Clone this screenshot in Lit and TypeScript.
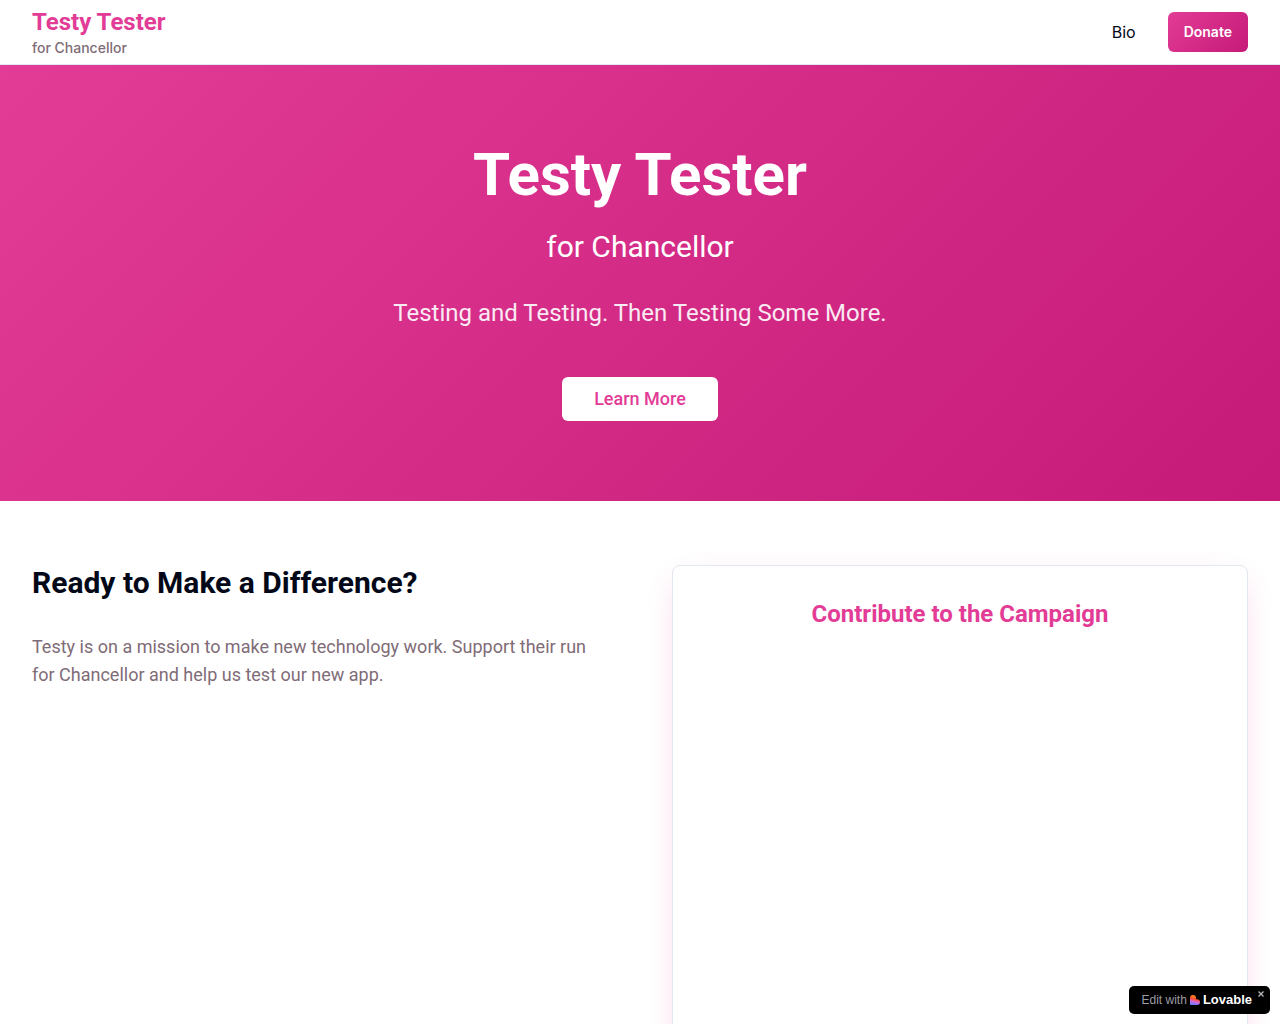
import { LitElement, html, css } from "lit";
import { customElement } from "lit/decorators.js";

@customElement("site-header")
class SiteHeader extends LitElement {
  static styles = css`
    :host {
      display: block;
      background: #fff;
      border-bottom: 1px solid #e2e8f0;
    }
    .bar {
      display: flex;
      align-items: center;
      justify-content: space-between;
      height: 64px;
      padding: 0 32px;
    }
    .brand {
      display: flex;
      flex-direction: column;
      color: #e23c96;
      text-decoration: none;
    }
    .name {
      font-family: var(--display);
      font-size: 24px;
      line-height: 32px;
      font-weight: 700;
    }
    .office {
      font-size: 14px;
      line-height: 20px;
      font-weight: 500;
      color: #806c77;
    }
    .links {
      display: flex;
      align-items: center;
      gap: 32px;
    }
    .link {
      font-size: 16px;
      line-height: 24px;
      color: #020817;
      text-decoration: none;
    }
    .donate {
      height: 40px;
      padding: 0 16px;
      border: 0;
      border-radius: 6px;
      background: linear-gradient(135deg, #e23c96, #c61a78);
      color: #fff;
      font: inherit;
      font-size: 14px;
      line-height: 20px;
      font-weight: 600;
      cursor: pointer;
    }
  `;

  render() {
    return html`
      <header class="bar">
        <a class="brand" href="#top">
          <span class="name">Testy Tester</span>
          <span class="office">for Chancellor</span>
        </a>
        <nav class="links">
          <a class="link" href="#bio">Bio</a>
          <button class="donate" type="button">Donate</button>
        </nav>
      </header>
    `;
  }
}

@customElement("hero-section")
class HeroSection extends LitElement {
  static styles = css`
    :host {
      display: block;
      background: linear-gradient(135deg, #e23c96, #c61a78);
      font-family: var(--display);
    }
    .hero {
      display: flex;
      flex-direction: column;
      align-items: center;
      padding: 80px 32px;
      color: #fff;
      text-align: center;
    }
    .title {
      margin: 0 0 24px;
      font-size: 60px;
      line-height: 60px;
      font-weight: 700;
    }
    .office {
      margin: 0 0 32px;
      font-size: 30px;
      line-height: 36px;
    }
    .tagline {
      margin: 0 0 48px;
      font-size: 24px;
      line-height: 32px;
      opacity: 0.9;
    }
    .more {
      height: 44px;
      padding: 0 32px;
      border: 0;
      border-radius: 6px;
      background: #fff;
      color: #e23c96;
      font: inherit;
      font-size: 18px;
      line-height: 28px;
      font-weight: 500;
      cursor: pointer;
    }
  `;

  render() {
    return html`
      <section class="hero">
        <h1 class="title">Testy Tester</h1>
        <p class="office">for Chancellor</p>
        <p class="tagline">Testing and Testing. Then Testing Some More.</p>
        <button class="more" type="button">Learn More</button>
      </section>
    `;
  }
}

@customElement("support-section")
class SupportSection extends LitElement {
  static styles = css`
    :host {
      display: block;
      font-family: var(--display);
    }
    .columns {
      display: grid;
      grid-template-columns: 1fr 1fr;
      gap: 64px;
      padding: 64px 32px;
    }
    .heading {
      margin: 0 0 32px;
      font-size: 30px;
      line-height: 36px;
      font-weight: 700;
      color: #020817;
    }
    .text {
      margin: 0;
      font-size: 18px;
      line-height: 28px;
      color: #806c77;
    }
    .card {
      padding: 32px;
      border: 1px solid #e2e8f0;
      border-radius: 8px;
      background: #fff;
      box-shadow: 0 10px 30px -10px rgba(226, 60, 150, 0.3);
    }
    .card-title {
      margin: 0 0 24px;
      font-size: 24px;
      line-height: 32px;
      font-weight: 700;
      color: #e23c96;
      text-align: center;
    }
    .form {
      min-height: 600px;
    }
  `;

  render() {
    return html`
      <main class="columns">
        <section>
          <h2 class="heading">Ready to Make a Difference?</h2>
          <p class="text">
            Testy is on a mission to make new technology work. Support their run
            for Chancellor and help us test our new app.
          </p>
        </section>
        <section class="card">
          <h3 class="card-title">Contribute to the Campaign</h3>
          <div class="form"></div>
        </section>
      </main>
    `;
  }
}

@customElement("edit-badge")
class EditBadge extends LitElement {
  static styles = css`
    :host {
      position: fixed;
      right: 10px;
      bottom: 10px;
    }
    .badge {
      display: flex;
      align-items: flex-start;
      border-radius: 5px;
      background: #000;
    }
    .link {
      display: flex;
      align-items: center;
      height: 28px;
      gap: 3px;
      padding-left: 13px;
      color: #fff;
      text-decoration: none;
    }
    .label {
      font-family: "Liberation Sans", Arial, sans-serif;
      font-size: 12px;
      line-height: 16px;
      color: #9c9ca3;
    }
    .mark {
      display: block;
      width: 10px;
      height: 10px;
    }
    .word {
      font-family: "Liberation Sans", Arial, sans-serif;
      font-size: 13px;
      line-height: 16px;
      font-weight: 700;
    }
    .close {
      display: flex;
      margin: 4px 5px 0;
      padding: 0;
      border: 0;
      background: none;
      color: #b8b8bc;
      cursor: pointer;
    }
  `;

  render() {
    return html`
      <div class="badge">
        <a class="link" href="#edit">
          <span class="label">Edit with</span>
          <svg class="mark" viewBox="0 0 20 20" aria-hidden="true">
            <defs>
              <linearGradient id="flame" x1="0.65" y1="0" x2="0.4" y2="1">
                <stop offset="0.2" stop-color="#ff7a18" />
                <stop offset="0.45" stop-color="#ff4d3d" />
                <stop offset="0.7" stop-color="#d06be0" />
                <stop offset="1" stop-color="#5b7cff" />
              </linearGradient>
            </defs>
            <path
              fill="url(#flame)"
              d="M6 0a6 6 0 0 1 6 6v2.3h2a6 5.85 0 0 1 0 11.7H0V6a6 6 0 0 1 6-6z"
            />
          </svg>
          <span class="word">Lovable</span>
        </a>
        <button class="close" type="button" aria-label="Close">
          <svg width="8" height="8" viewBox="0 0 8 8" aria-hidden="true">
            <path
              d="M1.5 1.5l5 5M6.5 1.5l-5 5"
              fill="none"
              stroke="currentColor"
              stroke-width="1.3"
            />
          </svg>
        </button>
      </div>
    `;
  }
}

@customElement("app-root")
class AppRoot extends LitElement {
  static styles = css`
    :host {
      --display: Roboto, "Liberation Sans", sans-serif;
      display: block;
      min-height: 100vh;
      background: #fff;
      color: #020817;
      font-family: Inter, "Liberation Sans", sans-serif;
    }
  `;

  render() {
    return html`
      <site-header></site-header>
      <hero-section></hero-section>
      <support-section></support-section>
      <edit-badge></edit-badge>
    `;
  }
}
